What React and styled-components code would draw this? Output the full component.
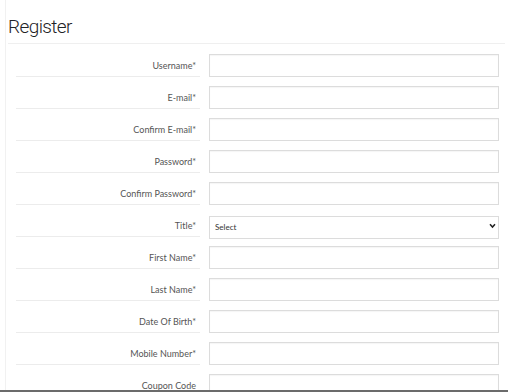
import React from 'react'
import styled, { createGlobalStyle } from 'styled-components'

const GlobalStyle = createGlobalStyle`
  html, body {
    margin: 0;
    padding: 0;
    background: #fff;
  }
  *, *::before, *::after {
    box-sizing: border-box;
  }
`

const Frame = styled.div`
  height: 392px;
  overflow: hidden;
  border-bottom: 2px solid #6b6b6b;
  font-family: Lato, "Open Sans", sans-serif;
  color: #333;
`

const Page = styled.div`
  margin-left: 5px;
  height: 100%;
  border-left: 1px solid #f1f1f1;
  padding: 0 3px 0 2px;
`

const Title = styled.h1`
  margin: 0;
  padding: 15px 0 0 0;
  height: 44px;
  font-family: Roboto, Lato, sans-serif;
  font-size: 19px;
  font-weight: 300;
  color: #1f2327;
  letter-spacing: -0.6px;
  border-bottom: 1px solid #efefef;
`

const Form = styled.form`
  padding-top: 10px;
  display: flex;
  flex-direction: column;
`

const Row = styled.div`
  display: grid;
  grid-template-columns: 184px 290px;
  column-gap: 9px;
  height: 32px;
  padding-left: 8px;
`

const Label = styled.label`
  display: flex;
  align-items: center;
  justify-content: flex-end;
  height: 23px;
  padding-right: 4px;
  border-bottom: 1px solid #ececec;
  font-size: 9px;
  color: #555;
`

const Input = styled.input`
  height: 23px;
  border: 1px solid #dcdcdc;
  box-shadow: inset 0 1px 1px rgba(0, 0, 0, 0.04);
  background: #fff;
  padding: 0 6px;
  outline: none;
`

const SelectWrap = styled.div`
  position: relative;
  height: 23px;
`

const Select = styled.select`
  appearance: none;
  width: 100%;
  height: 23px;
  border: 1px solid #dcdcdc;
  background: #fff;
  padding: 0 5px;
  font-family: Lato, sans-serif;
  font-size: 8px;
  color: #333;
  outline: none;
`

const Chevron = styled.svg`
  position: absolute;
  right: 3px;
  top: 9px;
  pointer-events: none;
`

const fields = [
  'Username*',
  'E-mail*',
  'Confirm E-mail*',
  'Password*',
  'Confirm Password*',
  'Title*',
  'First Name*',
  'Last Name*',
  'Date Of Birth*',
  'Mobile Number*',
  'Coupon Code',
]

export default function App() {
  return (
    <Frame>
      <GlobalStyle />
      <Page>
        <Title>Register</Title>
        <Form>
          {fields.map((f) => (
            <Row key={f}>
              <Label>{f}</Label>
              {f === 'Title*' ? (
                <SelectWrap>
                  <Select defaultValue="">
                    <option value="">Select</option>
                  </Select>
                  <Chevron width="7" height="6" viewBox="0 0 7 6">
                    <path d="M1 1.2 L3.5 4 L6 1.2" fill="none" stroke="#222" strokeWidth="1.5" />
                  </Chevron>
                </SelectWrap>
              ) : (
                <Input type={f.startsWith('Password') || f.startsWith('Confirm P') ? 'password' : 'text'} />
              )}
            </Row>
          ))}
        </Form>
      </Page>
    </Frame>
  )
}
